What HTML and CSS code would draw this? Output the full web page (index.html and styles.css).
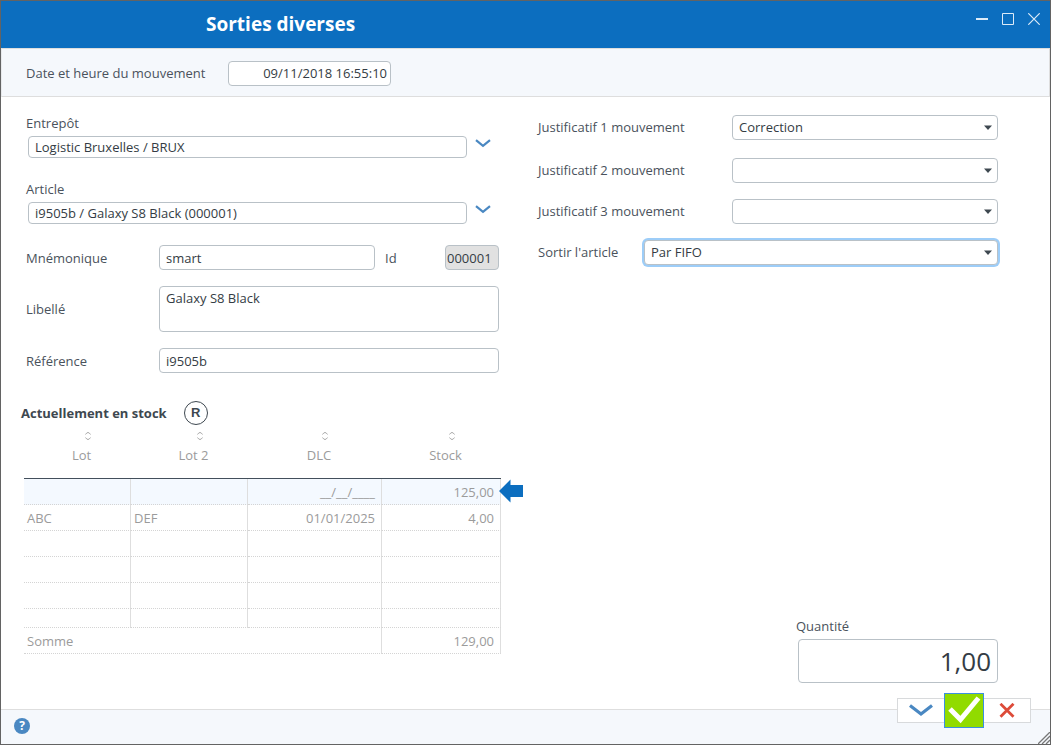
FILE: index.html
```html
<!DOCTYPE html>
<html lang="fr">
<head>
<meta charset="utf-8">
<title>Sorties diverses</title>
<link rel="stylesheet" href="styles.css">
</head>
<body>
<div class="window">
  <header class="titlebar">
    <h1 class="title">Sorties diverses</h1>
    <div class="window-controls">
      <button type="button" class="window-button" aria-label="Réduire"><svg width="12" height="12" viewBox="0 0 12 12"><path d="M0 6h12" stroke="currentColor" stroke-width="2"/></svg></button>
      <button type="button" class="window-button" aria-label="Agrandir"><svg width="12" height="12" viewBox="0 0 12 12"><path d="M.5.5h11v11H.5z" fill="none" stroke="currentColor"/></svg></button>
      <button type="button" class="window-button" aria-label="Fermer"><svg width="12" height="12" viewBox="0 0 12 12"><path d="M.3.3l11.4 11.4M11.7.3L.3 11.7" stroke="currentColor" stroke-width="1.2"/></svg></button>
    </div>
  </header>

  <div class="date-bar">
    <label class="label label-date" for="date">Date et heure du mouvement</label>
    <input class="field field-date" id="date" type="text" value="09/11/2018 16:55:10">
  </div>

  <main class="content">
    <section class="left">
      <div class="form">
        <div class="lookup">
          <label class="label" for="entrepot">Entrepôt</label>
          <div class="lookup-row">
            <input class="field field-short" id="entrepot" type="text" value="Logistic Bruxelles / BRUX">
            <button type="button" class="chevron-button" aria-label="Choisir un entrepôt"><svg width="16" height="9" viewBox="0 0 16 9"><path d="M1 1.2l7 5.6 7-5.6" fill="none" stroke="currentColor" stroke-width="2.2"/></svg></button>
          </div>
        </div>
        <div class="lookup">
          <label class="label" for="article">Article</label>
          <div class="lookup-row">
            <input class="field field-short" id="article" type="text" value="i9505b / Galaxy S8 Black (000001)">
            <button type="button" class="chevron-button" aria-label="Choisir un article"><svg width="16" height="9" viewBox="0 0 16 9"><path d="M1 1.2l7 5.6 7-5.6" fill="none" stroke="currentColor" stroke-width="2.2"/></svg></button>
          </div>
        </div>
        <div class="row">
          <label class="label label-left" for="mnemo">Mnémonique</label>
          <input class="field" id="mnemo" type="text" value="smart">
          <label class="label label-id" for="id">Id</label>
          <input class="field field-id" id="id" type="text" value="000001" readonly>
        </div>
        <div class="row">
          <label class="label label-left" for="libelle">Libellé</label>
          <textarea class="field field-area" id="libelle">Galaxy S8 Black</textarea>
        </div>
        <div class="row">
          <label class="label label-left" for="reference">Référence</label>
          <input class="field" id="reference" type="text" value="i9505b">
        </div>
      </div>

      <div class="stock-heading">
        <h2 class="stock-title">Actuellement en stock</h2>
        <button type="button" class="round-button">R</button>
      </div>
      <div class="stock">
        <table class="stock-table">
          <colgroup><col class="col-lot"><col class="col-lot2"><col class="col-dlc"><col class="col-stock"></colgroup>
          <thead>
            <tr>
              <th scope="col"><svg class="sort" width="6" height="8" viewBox="0 0 6 8"><path d="M.5 2.5L2 .7h2l1.5 1.8M.5 5.5L2 7.3h2l1.5-1.8"/></svg>Lot</th>
              <th scope="col"><svg class="sort" width="6" height="8" viewBox="0 0 6 8"><path d="M.5 2.5L2 .7h2l1.5 1.8M.5 5.5L2 7.3h2l1.5-1.8"/></svg>Lot 2</th>
              <th scope="col"><svg class="sort" width="6" height="8" viewBox="0 0 6 8"><path d="M.5 2.5L2 .7h2l1.5 1.8M.5 5.5L2 7.3h2l1.5-1.8"/></svg>DLC</th>
              <th scope="col"><svg class="sort" width="6" height="8" viewBox="0 0 6 8"><path d="M.5 2.5L2 .7h2l1.5 1.8M.5 5.5L2 7.3h2l1.5-1.8"/></svg>Stock</th>
            </tr>
          </thead>
          <tbody>
            <tr class="selected"><td></td><td></td><td class="num">__/__/____</td><td class="num">125,00</td></tr>
            <tr><td>ABC</td><td>DEF</td><td class="num">01/01/2025</td><td class="num">4,00</td></tr>
            <tr><td></td><td></td><td></td><td></td></tr>
            <tr><td></td><td></td><td></td><td></td></tr>
            <tr><td></td><td></td><td></td><td></td></tr>
            <tr class="partial"><td></td><td></td><td></td><td></td></tr>
          </tbody>
          <tfoot>
            <tr><td colspan="3">Somme</td><td class="num">129,00</td></tr>
          </tfoot>
        </table>
        <svg class="row-arrow" width="24" height="24" viewBox="0 0 24 24"><path d="M0 12L11.5.5V6H24v12H11.5v5.500z" fill="#0c6ebf"/></svg>
      </div>
    </section>

    <section class="right">
      <div class="row row-first">
        <label class="label label-right" for="just1">Justificatif 1 mouvement</label>
        <div class="select-wrap">
          <select class="field" id="just1"><option>Correction</option></select>
          <svg class="caret" width="8" height="5" viewBox="0 0 8 5"><path d="M0 .5h8L4 5z" fill="currentColor"/></svg>
        </div>
      </div>
      <div class="row">
        <label class="label label-right" for="just2">Justificatif 2 mouvement</label>
        <div class="select-wrap">
          <select class="field" id="just2"><option></option></select>
          <svg class="caret" width="8" height="5" viewBox="0 0 8 5"><path d="M0 .5h8L4 5z" fill="currentColor"/></svg>
        </div>
      </div>
      <div class="row">
        <label class="label label-right" for="just3">Justificatif 3 mouvement</label>
        <div class="select-wrap">
          <select class="field" id="just3"><option></option></select>
          <svg class="caret" width="8" height="5" viewBox="0 0 8 5"><path d="M0 .5h8L4 5z" fill="currentColor"/></svg>
        </div>
      </div>
      <div class="row">
        <label class="label label-sortir" for="sortir">Sortir l'article</label>
        <div class="select-wrap">
          <select class="field field-active" id="sortir"><option>Par FIFO</option></select>
          <svg class="caret" width="8" height="5" viewBox="0 0 8 5"><path d="M0 .5h8L4 5z" fill="currentColor"/></svg>
        </div>
      </div>
      <div class="quantity">
        <label class="label" for="quantite">Quantité</label>
        <input class="field field-quantity" id="quantite" type="text" value="1,00">
      </div>
    </section>
  </main>

  <footer class="footer">
    <button type="button" class="help" aria-label="Aide">?</button>
    <div class="actions">
      <button type="button" class="action action-more" aria-label="Plus"><svg width="24" height="13" viewBox="0 0 24 13"><path d="M1 1.500l11 8.500 11-8.500" fill="none" stroke="#4a88c2" stroke-width="3.200"/></svg></button>
      <button type="button" class="action action-ok" aria-label="Valider"><svg width="38" height="33" viewBox="0 0 38 33"><path d="M5 15l10.500 10.500L33.500 4" fill="none" stroke="#fff" stroke-width="5"/></svg></button>
      <button type="button" class="action action-cancel" aria-label="Annuler"><svg width="16" height="16" viewBox="0 0 16 16"><path d="M1.500 .8l13 13M14.500 .8l-13 13" stroke="#dd4b39" stroke-width="2.800"/></svg></button>
    </div>
    <svg class="grip" width="12" height="12" viewBox="0 0 12 12"><path d="M0 12L12 0M4 12l8-8M8 12l4-4" stroke="#777" stroke-width="1.300"/></svg>
  </footer>
</div>
</body>
</html>
```
FILE: styles.css
```css
* { box-sizing: border-box; }

body {
  margin: 0;
  font-family: "Open Sans", "Noto Sans", sans-serif;
  font-size: 13px;
  line-height: 18px;
  color: #3e4850;
  background: #fff;
}

button {
  margin: 0;
  padding: 0;
  border: 0;
  background: none;
  font: inherit;
  color: inherit;
}

svg { display: block; }

.window {
  display: flex;
  flex-direction: column;
  min-height: 100vh;
  border: 1px solid #636363;
}

/* Title bar */
.titlebar {
  display: flex;
  justify-content: space-between;
  height: 47px;
  padding: 0 3px 0 205px;
  background: #0c6ebf;
  color: #fff;
}
.title {
  margin: 0;
  font-size: 19px;
  font-weight: 700;
  line-height: 46px;
}
.window-controls { display: flex; height: 36px; }
.window-button {
  display: flex;
  align-items: center;
  justify-content: center;
  width: 26px;
  color: #dcebf8;
}

.date-bar {
  display: flex;
  align-items: center;
  height: 49px;
  padding: 1px 0 0 24px;
  border: 1px solid #dedede;
  border-left-color: #e8eaec;
  background: #f5f8fc;
}

/* Fields */
.label { color: #4a525c; }
.label-date { flex: none; width: 202px; }
.field {
  flex: 1;
  display: block;
  min-width: 0;
  width: 100%;
  height: 25px;
  margin: 0;
  padding: 0 6px;
  border: 1px solid #b9c1c7;
  border-radius: 4px;
  outline: 0;
  background: #fff;
  font: inherit;
  color: #343c44;
}
.field-date { flex: none; width: 163px; padding: 0 3px; text-align: right; }
.field-short { height: 22px; }
.field-id { flex: none; width: 54px; padding: 0 1px; background: #e1e1e1; }
.field-area { height: 46px; padding: 2px 6px; resize: none; }
.field-active { box-shadow: 0 0 0 2px #9dcdf8; }
.field-quantity {
  height: 44px;
  margin-left: 2px;
  width: 200px;
  font-size: 26px;
  text-align: right;
}

/* Columns */
.content {
  flex: 1;
  display: grid;
  grid-template-columns: 480fr 460fr;
  gap: 37px;
  padding: 17px 52px 26px 20px;
}
.form {
  display: flex;
  flex-direction: column;
  gap: 16px;
  padding: 0 2px 0 5px;
}
.row { display: flex; align-items: center; }
.label-left { flex: none; width: 133px; }
.label-id { flex: none; width: 70px; padding-left: 10px; }

.lookup { display: flex; flex-direction: column; gap: 4px; margin-bottom: 5px; }
.lookup:first-child { margin-bottom: 6px; }
.lookup-row { display: flex; align-items: flex-start; padding-left: 2px; }
.chevron-button {
  display: flex;
  flex: none;
  align-items: center;
  justify-content: center;
  width: 32px;
  height: 15px;
  color: #4a88c2;
}

/* Stock */
.stock-heading {
  display: flex;
  align-items: center;
  gap: 17px;
  margin-top: 28px;
}
.stock-title { margin: 0; font-size: 13px; font-weight: 700; }
.round-button {
  width: 24px;
  height: 24px;
  border: 1px solid #3e4850;
  border-radius: 50%;
  font-family: "Liberation Sans", Arial, sans-serif;
  font-weight: 700;
  line-height: 22px;
}
.stock { position: relative; margin-left: 3px; }
.stock-table {
  width: 100%;
  table-layout: fixed;
  border-collapse: separate;
  border-spacing: 0;
  color: #9b9b9b;
}
.col-lot { width: 107px; }
.col-lot2 { width: 117px; }
.col-dlc { width: 134px; }
.stock-table th {
  height: 54px;
  padding: 0 0 0 8px;
  border-bottom: 1px solid #434f5b;
  font-weight: 400;
  vertical-align: top;
}
.sort {
  margin: 7px auto 6px;
  padding-left: 12px;
  box-sizing: content-box;
  fill: none;
  stroke: #aaa;
}
.stock-table td {
  height: 26px;
  padding: 0 6px 0 3px;
  border-right: 1px solid #dedede;
  border-bottom: 1px dotted #d4d4d4;
}
.stock-table .selected td { background: #f4f9ff; }
.stock-table .partial td { height: 19px; }
.stock-table .num { text-align: right; }
.row-arrow { position: absolute; top: 54px; right: -22px; }

/* Right side */
.right { display: flex; flex-direction: column; gap: 16px; padding-top: 1px; }
.right .row .label { padding-bottom: 2px; }
.row-first { margin-bottom: 2px; }
.label-right { flex: none; width: 194px; }
.label-sortir { flex: none; width: 106px; }
.select-wrap { position: relative; flex: 1; }
.select-wrap .field { appearance: none; padding-bottom: 2px; }
.caret {
  position: absolute;
  top: 10px;
  right: 6px;
  pointer-events: none;
  color: #3e4850;
}
.quantity {
  display: flex;
  flex: none;
  flex-direction: column;
  gap: 4px;
  width: 202px;
  margin: auto 0 0 auto;
}
.quantity .field { flex: none; }

/* Footer */
.footer {
  position: relative;
  display: flex;
  align-items: center;
  height: 35px;
  padding: 0 0 2px 13px;
  border-top: 1px solid #dedede;
  background: #f5f8fc;
}
.help {
  width: 16px;
  height: 16px;
  border-radius: 50%;
  background: #4a88c2;
  color: #fff;
  font-size: 12px;
  font-weight: 700;
  line-height: 16px;
}
.actions {
  position: absolute;
  top: -17px;
  right: 19px;
  display: flex;
  align-items: center;
}
.action {
  display: flex;
  align-items: center;
  justify-content: center;
  width: 47px;
  height: 25px;
  border: 1px solid #d8dadc;
  background: #fff;
}
.action-more { border-right: 0; }
.action-cancel { border-left: 0; }
.action-ok {
  width: 40px;
  height: 35px;
  border-color: #3c90e0;
  background: #91db00;
}
.grip { position: absolute; right: 0; bottom: 0; }
```
